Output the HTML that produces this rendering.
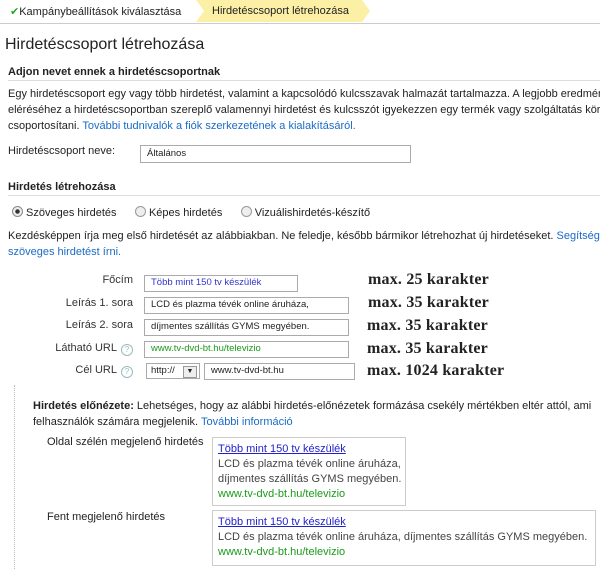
<!DOCTYPE html>
<html><head><meta charset="utf-8"><style>
body{margin:0;width:600px;height:569px;overflow:hidden;background:#fff;font-family:"Liberation Sans",Arial,sans-serif;font-size:11px;color:#222;position:relative}
.a{position:absolute;white-space:nowrap}
.l{color:#1a6bc7}
.in{position:absolute;border:1px solid #aaa;background:#fff;height:15px;box-sizing:border-box;font-size:9.5px;line-height:14px;padding-left:6px;white-space:nowrap}
.mx{position:absolute;font-family:"Liberation Serif",serif;font-weight:bold;font-size:16px;letter-spacing:0.2px;white-space:nowrap}
.lab{position:absolute;right:467px;text-align:right;white-space:nowrap;color:#333}
.q{display:inline-block;width:10px;height:10px;border-radius:50%;border:1px solid #9bb;color:#9bb;font-size:8px;line-height:10px;text-align:center;margin-left:4px;vertical-align:-1px}
.b{position:absolute;border:1px solid #ccc;padding:4px 5px;line-height:15px;font-size:11px;white-space:nowrap;overflow:hidden;box-sizing:border-box;color:#444}
.b u{color:#2222cc}
.g{color:#1b9a1b}
</style></head><body>
<svg class="a" style="left:0;top:0" width="600" height="25"><polygon points="196,0 362,0 370,11 362,22 196,22 204,11" fill="#fcefa6"/><line x1="0" y1="23.5" x2="600" y2="23.5" stroke="#ccc"/></svg>
<div class="a" style="left:10px;top:5px;font-size:11px"><span style="color:#2a2">✔</span>Kampánybeállítások kiválasztása</div>
<div class="a" style="left:212px;top:5px">Hirdetéscsoport létrehozása</div>
<div class="a" style="left:5px;top:36px;font-size:16px">Hirdetéscsoport létrehozása</div>
<div class="a" style="left:8px;top:66px;font-weight:bold">Adjon nevet ennek a hirdetéscsoportnak</div>
<div class="a" style="left:8px;top:80px;width:592px;border-top:1px solid #ddd"></div>
<div class="a" style="left:8px;top:86px;line-height:16px">Egy hirdetéscsoport egy vagy több hirdetést, valamint a kapcsolódó kulcsszavak halmazát tartalmazza. A legjobb eredmények<br>eléréséhez a hirdetéscsoportban szereplő valamennyi hirdetést és kulcsszót igyekezzen egy termék vagy szolgáltatás köré<br>csoportosítani. <span class="l">További tudnivalók a fiók szerkezetének a kialakításáról.</span></div>
<div class="a" style="left:8px;top:145px">Hirdetéscsoport neve:</div>
<div class="in" style="left:140px;top:145px;width:271px;height:18px;line-height:16px">Általános</div>
<div class="a" style="left:8px;top:181px;font-weight:bold">Hirdetés létrehozása</div>
<div class="a" style="left:8px;top:195px;width:592px;border-top:1px solid #ddd"></div>
<div class="a" style="left:12px;top:206px"><span style="display:inline-block;width:9px;height:9px;border-radius:50%;border:1px solid #888;background:radial-gradient(#333 30%,#eee 40%);vertical-align:-1px"></span> Szöveges hirdetés &nbsp;&nbsp;&nbsp;&nbsp;&nbsp;<span style="display:inline-block;width:9px;height:9px;border-radius:50%;border:1px solid #999;background:#eee;vertical-align:-1px"></span> Képes hirdetés &nbsp;&nbsp;&nbsp;&nbsp;&nbsp;<span style="display:inline-block;width:9px;height:9px;border-radius:50%;border:1px solid #999;background:#eee;vertical-align:-1px"></span> Vizuálishirdetés-készítő</div>
<div class="a" style="left:8px;top:228px;line-height:16px">Kezdésképpen írja meg első hirdetését az alábbiakban. Ne feledje, később bármikor létrehozhat új hirdetéseket. <span class="l">Segítség<br>szöveges hirdetést írni.</span></div>
<div class="lab" style="top:274px">Főcím</div>
<div class="lab" style="top:297px">Leírás 1. sora</div>
<div class="lab" style="top:319px">Leírás 2. sora</div>
<div class="lab" style="top:342px;right:467px">Látható URL<span class="q">?</span></div>
<div class="lab" style="top:364px">Cél URL<span class="q">?</span></div>
<div class="in" style="left:144px;top:275px;width:154px;height:17px;color:#33c">Több mint 150 tv készülék</div>
<div class="in" style="left:144px;top:297px;width:205px;height:17px">LCD és plazma tévék online áruháza,</div>
<div class="in" style="left:144px;top:319px;width:205px;height:17px">díjmentes szállítás GYMS megyében.</div>
<div class="in" style="left:144px;top:341px;width:205px;height:17px" ><span class="g">www.tv-dvd-bt.hu/televizio</span></div>
<div class="in" style="left:146px;top:363px;width:54px;height:16px;padding-left:4px">http://<span style="position:absolute;right:2px;top:2px;width:12px;height:10px;border:1px solid #999;background:#eee;font-size:7px;line-height:10px;text-align:center">▼</span></div>
<div class="in" style="left:204px;top:363px;width:151px;height:17px">www.tv-dvd-bt.hu</div>
<div class="mx" style="left:368px;top:271px">max. 25 karakter</div>
<div class="mx" style="left:368px;top:294px">max. 35 karakter</div>
<div class="mx" style="left:367px;top:317px">max. 35 karakter</div>
<div class="mx" style="left:367px;top:340px">max. 35 karakter</div>
<div class="mx" style="left:367px;top:362px">max. 1024 karakter</div>
<div class="a" style="left:14px;top:385px;height:184px;border-left:1px dotted #bbb"></div>
<div class="a" style="left:33px;top:398px;line-height:16px"><b>Hirdetés előnézete:</b> Lehetséges, hogy az alábbi hirdetés-előnézetek formázása csekély mértékben eltér attól, ami<br>felhasználók számára megjelenik. <span class="l">További információ</span></div>
<div class="a" style="left:47px;top:436px">Oldal szélén megjelenő hirdetés</div>
<div class="b" style="left:212px;top:437px;width:194px;height:69px"><u>Több mint 150 tv készülék</u><br>LCD és plazma tévék online áruháza,<br>díjmentes szállítás GYMS megyében.<br><span class="g">www.tv-dvd-bt.hu/televizio</span></div>
<div class="a" style="left:47px;top:511px">Fent megjelenő hirdetés</div>
<div class="b" style="left:212px;top:510px;width:384px;height:56px"><u>Több mint 150 tv készülék</u><br>LCD és plazma tévék online áruháza, díjmentes szállítás GYMS megyében.<br><span class="g">www.tv-dvd-bt.hu/televizio</span></div>
</body></html>
